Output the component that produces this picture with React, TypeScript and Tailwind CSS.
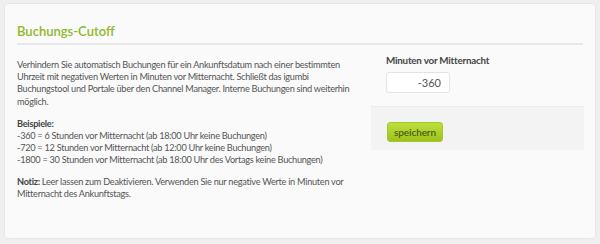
export default function App() {
  return (
    <div className="min-h-[244px] w-[600px] bg-[#efefef] px-[5px] pb-[6px] pt-[4px] font-['Lato',sans-serif] text-[#555]">
      <section className="h-[234px] rounded-[3px] bg-[#fafafa] px-[12px] shadow-[0_0_2px_rgba(0,0,0,0.12)]">
        <h2 className="border-b-2 border-[#e8e8e8] pb-[4px] pt-[20px] text-[13px] font-semibold leading-[15px] text-[#8fb82a]">
          Buchungs-Cutoff
        </h2>

        <div className="grid grid-cols-[338px_213px] gap-x-[16px]">
          <div className="pt-[14px] text-[9.2px] leading-[12.2px] tracking-[-0.28px]">
            <p>
              Verhindern Sie automatisch Buchungen für ein Ankunftsdatum nach einer bestimmten
              Uhrzeit mit negativen Werten in Minuten vor Mitternacht. Schließt das igumbi
              Buchungstool und Portale über den Channel Manager. Interne Buchungen sind weiterhin
              möglich.
            </p>
            <p className="mt-[10px]">
              <strong className="font-bold text-[#444]">Beispiele:</strong>
              <br />
              -360 = 6 Stunden vor Mitternacht (ab 18:00 Uhr keine Buchungen)
              <br />
              -720 = 12 Stunden vor Mitternacht (ab 12:00 Uhr keine Buchungen)
              <br />
              -1800 = 30 Stunden vor Mitternacht (ab 18:00 Uhr des Vortags keine Buchungen)
            </p>
            <p className="mt-[9px]">
              <strong className="font-bold text-[#444]">Notiz:</strong> Leer lassen zum
              Deaktivieren. Verwenden Sie nur negative Werte in Minuten vor Mitternacht des
              Ankunftstags.
            </p>
          </div>

          <div className="pt-[8px]">
            <div className="px-[15px]">
              <label className="block text-[9.8px] font-bold leading-[14px] tracking-[-0.2px] text-[#444]">
                Minuten vor Mitternacht
              </label>
              <input
                type="text"
                defaultValue="-360"
                className="mt-[5px] h-[21px] w-[64px] rounded-[3px] border border-[#e3e3e3] bg-white px-[8px] text-right text-[11px] text-[#555] outline-none"
              />
            </div>
            <div className="mt-[13px] h-[44px] border-t border-[#ebebeb] bg-[#f3f3f3] px-[16px] pt-[11px]">
              <button
                type="button"
                className="h-[20px] w-[56px] rounded-[3px] border border-[#a6c82a] bg-gradient-to-b from-[#bddf3c] to-[#9cc21c] text-[10px] font-semibold leading-[18px] tracking-[-0.1px] text-[#4d5c12]"
              >
                speichern
              </button>
            </div>
          </div>
        </div>
      </section>
    </div>
  );
}
